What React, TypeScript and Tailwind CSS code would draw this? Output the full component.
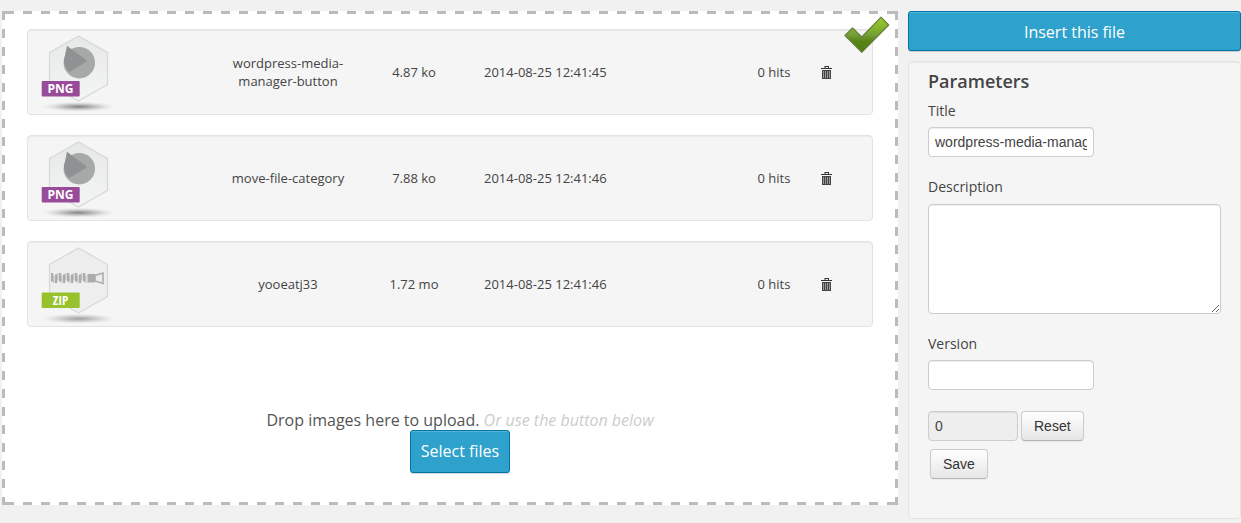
import type { ReactNode } from "react";

type FileKind = "png" | "zip";

interface MediaFile {
  name: string;
  size: string;
  date: string;
  hits: number;
  kind: FileKind;
}

const files: MediaFile[] = [
  { name: "wordpress-media-manager-button", size: "4.87 ko", date: "2014-08-25 12:41:45", hits: 0, kind: "png" },
  { name: "move-file-category", size: "7.88 ko", date: "2014-08-25 12:41:46", hits: 0, kind: "png" },
  { name: "yooeatj33", size: "1.72 mo", date: "2014-08-25 12:41:46", hits: 0, kind: "zip" },
];

function PngArt() {
  return (
    <>
      <circle cx="49.3" cy="32.7" r="15.7" fill="#a7a9a9" />
      <path d="M37 15.7 57.3 31 39.5 42C35.5 38.5 33.5 34.5 34.2 29.5Z" fill="#8f9193" />
    </>
  );
}

function ZipArt() {
  const teeth = [21, 25, 29, 33, 37, 41, 45, 49, 53];
  return (
    <g fill="#acacac">
      {teeth.map((x, i) => (
        <g key={x}>
          <rect x={x} y={i % 2 ? 32.5 : 31} width="2.2" height="8.5" />
          <rect x={x + 2.2} y={i % 2 ? 31 : 33.5} width="1.2" height="7.5" fill="#bcbcbc" />
        </g>
      ))}
      <rect x="57.5" y="32" width="7.5" height="8.5" />
      <path d="M65 33.5 73 31v10.5l-8-2.5z" fill="#ececec" stroke="#acacac" strokeWidth="1.6" />
    </g>
  );
}

function FileIcon({ kind }: { kind: FileKind }) {
  const png = kind === "png";
  return (
    <svg viewBox="0 0 90 84" className="ml-0.5 h-[84px] w-[90px]" role="img" aria-label={kind}>
      <defs>
        <linearGradient id={`hex-${kind}`} x1="0" y1="0" x2="0" y2="1">
          <stop offset="0" stopColor={png ? "#e6e8e8" : "#ededed"} />
          <stop offset="1" stopColor={png ? "#f4f5f5" : "#efefef"} />
        </linearGradient>
        <radialGradient id={`shade-${kind}`}>
          <stop offset="0" stopColor="#707070" stopOpacity={png ? 0.85 : 0.65} />
          <stop offset="0.4" stopColor="#808080" stopOpacity={png ? 0.5 : 0.4} />
          <stop offset="0.75" stopColor="#909090" stopOpacity="0.15" />
          <stop offset="1" stopColor="#a0a0a0" stopOpacity="0" />
        </radialGradient>
      </defs>
      <ellipse cx="48.7" cy="76.7" rx="37" ry="5" fill={`url(#shade-${kind})`} />
      <path
        d="M48.5 6 77.5 22.5v32L48.5 71l-29-16.5v-32z"
        fill={`url(#hex-${kind})`}
        stroke="#d6d7d7"
        strokeWidth="1.2"
        strokeLinejoin="round"
      />
      {png ? <PngArt /> : <ZipArt />}
      <rect x="11.7" y={png ? 51 : 50.5} width="38" height="15.5" rx="1" fill={png ? "#974b98" : "#98c22d"} />
      {png ? (
        <text x="30.5" y="63" textAnchor="middle" fontSize="12" fontWeight="700" fill="#fff" fontFamily="Open Sans, sans-serif">
          PNG
        </text>
      ) : (
        <text x="30.5" y="63" textAnchor="middle" fontSize="13" fontWeight="700" fill="#fff" fontFamily="Open Sans Condensed, Open Sans, sans-serif">
          ZIP
        </text>
      )}
    </svg>
  );
}

function TrashIcon() {
  return (
    <svg viewBox="0 0 11 13" className="h-[13px] w-[11px]" aria-hidden="true">
      <path d="M0 2h11v1H0zM3.5 0h4.5v2H7V1H4.5v1h-1z" fill="#333" />
      <path d="M1 4h9v9H1z" fill="#444" />
      <path d="M2 5h1v7H2zM4 5h1v7H4zM6 5h1v7H6zM8 5h1v7H8z" fill="#999" />
    </svg>
  );
}

function CheckMark() {
  return (
    <svg viewBox="0 0 46 38" className="pointer-events-none absolute top-[5px] right-2 h-[38px] w-[46px]" role="img" aria-label="Selected">
      <defs>
        <linearGradient id="tick" x1="0" y1="0" x2="0" y2="1">
          <stop offset="0" stopColor="#9ccb2c" />
          <stop offset="0.3" stopColor="#86b32c" />
          <stop offset="0.5" stopColor="#759f38" />
          <stop offset="0.68" stopColor="#588417" />
          <stop offset="1" stopColor="#4f7d12" />
        </linearGradient>
      </defs>
      <path
        d="M1 19.5 8.5 12 17.8 21 37 1.2 44.7 9 17.8 36.3z"
        fill="url(#tick)"
        stroke="#66803f"
        strokeWidth="1.2"
        strokeLinejoin="round"
      />
    </svg>
  );
}

function GreyButton({ children }: { children: ReactNode }) {
  return (
    <button
      type="button"
      className="h-[30px] rounded border border-[#ccc] border-b-[#b3b3b3] bg-linear-to-b from-white to-[#e6e6e6] px-3 font-['Liberation_Sans',sans-serif] text-sm text-[#333] shadow-xs"
    >
      {children}
    </button>
  );
}

const field =
  "block rounded border border-[#ccc] px-1.5 font-['Liberation_Sans',sans-serif] text-sm text-[#444] shadow-[inset_0_1px_1px_rgba(0,0,0,0.075)]";
const blueButton = "rounded-[3px] border border-[#0074a2] bg-[#2ea2cc] text-white shadow-[inset_0_1px_0_rgba(120,200,230,0.5),0_1px_0_rgba(0,0,0,0.15)]";

export default function App() {
  return (
    <div className="flex min-h-screen items-start gap-2.5 bg-[#f1f1f1] pt-[11px] pb-1 pl-0.5 font-['Open_Sans',sans-serif] text-[#444]">
      <main className="relative min-w-0 flex-1 bg-white bg-[linear-gradient(90deg,#bbb_50%,transparent_50%),linear-gradient(90deg,#bbb_50%,transparent_50%),linear-gradient(#bbb_50%,transparent_50%),linear-gradient(#bbb_50%,transparent_50%)] [background-position:3px_0,3px_100%,0_0,100%_0] [background-repeat:repeat-x,repeat-x,repeat-y,repeat-y] [background-size:18px_3px,18px_3px,3px_18px,3px_18px] px-[25px] pt-[18px] pb-8">
        <table className="block text-[13px] leading-[18px]" aria-label="Files">
          <tbody className="grid gap-5">
            {files.map((file) => (
              <tr
                key={file.name}
                className="grid grid-cols-[195fr_130fr_122fr_260fr_78fr_27fr] items-center rounded border border-[#e3e3e3] bg-[#f5f5f5] pr-8 text-center shadow-[inset_0_1px_1px_rgba(0,0,0,0.05)]"
              >
                <td>
                  <FileIcon kind={file.kind} />
                </td>
                <td>{file.name}</td>
                <td>{file.size}</td>
                <td className="pl-[9px] text-left">{file.date}</td>
                <td>{file.hits} hits</td>
                <td className="flex justify-center">
                  <button type="button" aria-label={`Delete ${file.name}`}>
                    <TrashIcon />
                  </button>
                </td>
              </tr>
            ))}
          </tbody>
        </table>
        <CheckMark />
        <div className="flex flex-col items-center pt-[83px] pl-5">
          <p className="text-base leading-5 text-[#555]">
            Drop images here to upload. <em className="text-[#ccc]">Or use the button below</em>
          </p>
          <button type="button" className={`h-[43px] px-2.5 pb-0.5 text-base ${blueButton}`}>
            Select files
          </button>
        </div>
      </main>

      <aside className="w-[333px] shrink-0">
        <button type="button" className={`block h-10 w-full pt-0.5 text-base ${blueButton}`}>
          Insert this file
        </button>
        <form className="mt-2.5 rounded border border-[#e3e3e3] bg-[#f5f5f5] px-[19px] pt-[9px] pb-[39px] text-sm leading-5 shadow-[inset_0_1px_1px_rgba(0,0,0,0.05)]">
          <h2 className="text-lg leading-5 font-semibold">Parameters</h2>
          <label htmlFor="title" className="mt-2.5 block">
            Title
          </label>
          <input id="title" defaultValue="wordpress-media-manager-button" className={`mt-1.5 h-[30px] w-[166px] bg-white ${field}`} />
          <label htmlFor="description" className="mt-5 block">
            Description
          </label>
          <textarea id="description" className={`mt-[7px] h-[110px] w-full bg-white ${field}`} />
          <label htmlFor="version" className="mt-5 block">
            Version
          </label>
          <input id="version" className={`mt-1.5 h-[30px] w-[166px] bg-white ${field}`} />
          <div className="mt-[21px] flex items-center gap-[3px]">
            <input aria-label="Hits" readOnly defaultValue="0" className={`h-[30px] w-[90px] bg-[#eee] ${field}`} />
            <GreyButton>Reset</GreyButton>
          </div>
          <div className="mt-2 pl-0.5">
            <GreyButton>Save</GreyButton>
          </div>
        </form>
      </aside>
    </div>
  );
}
